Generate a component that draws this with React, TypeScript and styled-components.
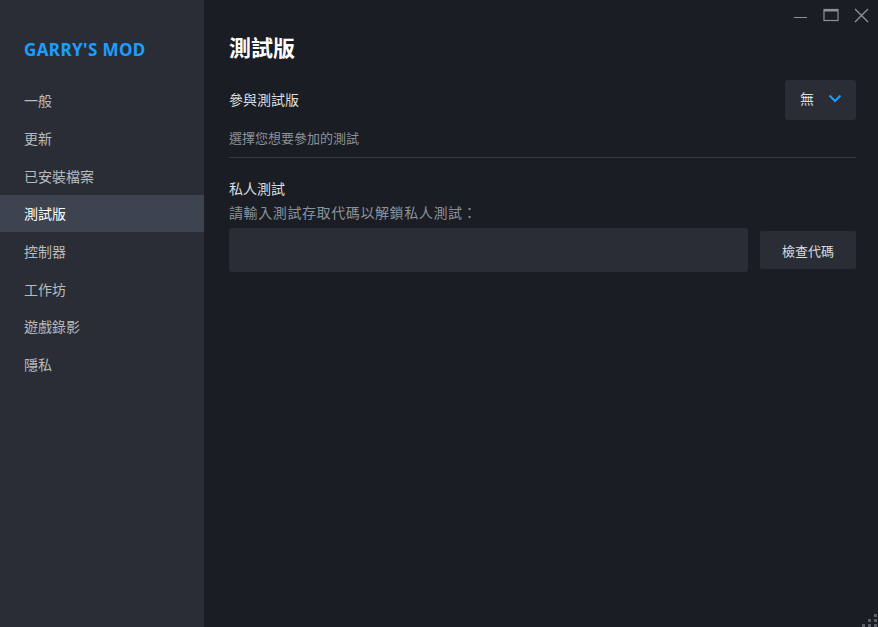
import React from "react";
import styled, { createGlobalStyle } from "styled-components";

const GlobalStyle = createGlobalStyle`
  html, body { margin: 0; padding: 0; height: 100%; }
  body {
    background: #1a1d24;
    font-family: "Noto Sans CJK TC", "Noto Sans", sans-serif;
    overflow: hidden;
  }
  #root { height: 100%; }
`;

const NAV = ["一般", "更新", "已安裝檔案", "測試版", "控制器", "工作坊", "遊戲錄影", "隱私"];

const Shell = styled.div`
  display: flex;
  height: 627px;
  position: relative;
`;

const Sidebar = styled.aside`
  width: 204px;
  flex-shrink: 0;
  background: #2a2d35;
  padding-top: 38px;
  box-sizing: border-box;
`;

const Logo = styled.div`
  font-family: "Noto Sans", "Liberation Sans", sans-serif;
  font-weight: 700;
  font-size: 17px;
  line-height: 24px;
  color: #1a9fff;
  padding-left: 24px;
  margin-bottom: 19.5px;
  letter-spacing: 0.4px;
`;

const NavItem = styled.div<{ $active?: boolean }>`
  height: 37.7px;
  display: flex;
  align-items: center;
  padding-left: 24px;
  font-size: 14px;
  color: ${(p) => (p.$active ? "#ffffff" : "#b8bcbf")};
  background: ${(p) => (p.$active ? "#3d4450" : "transparent")};
`;

const Main = styled.main`
  flex: 1;
  padding: 30px 22px 0 25px;
  box-sizing: border-box;
`;

const Title = styled.h1`
  margin: 0 0 18px;
  font-size: 22px;
  line-height: 32px;
  font-weight: 700;
  color: #ffffff;
`;

const Row = styled.div`
  display: flex;
  align-items: center;
  justify-content: space-between;
  height: 40px;
`;

const Label = styled.div`
  font-size: 14px;
  line-height: 20px;
  color: #dcdedf;
`;

const RowLabel = styled(Label)`
  margin-top: -3px;
`;

const Hint = styled.div<{ $top?: number }>`
  font-size: 13px;
  line-height: 18px;
  color: #8b929a;
  margin-top: ${(p) => p.$top ?? 0}px;
`;

const Dropdown = styled.div`
  width: 71px;
  height: 40px;
  box-sizing: border-box;
  border-radius: 3px;
  background: #2a2d35;
  display: flex;
  align-items: center;
  padding-left: 15px;
  padding-bottom: 4px;
  gap: 14px;
  font-size: 14px;
  color: #dcdedf;
`;

const Divider = styled.div`
  height: 1px;
  background: #363a42;
  margin: 10px 0 20px;
`;

const SubHint = styled.div`
  font-size: 14px;
  line-height: 20px;
  color: #8b929a;
  margin-top: 4px;
  letter-spacing: 0.6px;
`;

const CodeRow = styled.div`
  display: flex;
  align-items: center;
  gap: 12px;
  margin-top: 6px;
`;

const CodeInput = styled.input`
  flex: 1;
  height: 44px;
  border: none;
  border-radius: 3px;
  background: #2a2d35;
  outline: none;
  color: #dcdedf;
  font-size: 14px;
  padding: 0 12px;
`;

const Button = styled.button`
  width: 96px;
  height: 38px;
  border: none;
  border-radius: 2px;
  background: #2a2d35;
  color: #dcdedf;
  font-family: "Noto Sans CJK TC", sans-serif;
  font-size: 13px;
  padding: 0;
`;

const WindowControls = styled.div`
  position: absolute;
  top: 6px;
  right: 2px;
  display: flex;
`;

const WinBtn = styled.div`
  width: 30px;
  height: 18px;
  display: flex;
  align-items: center;
  justify-content: center;
  color: #8b929a;
`;

const Grip = styled.svg`
  position: absolute;
  right: 0;
  bottom: 0;
`;

export default function App() {
  return (
    <>
      <GlobalStyle />
      <Shell>
        <Sidebar>
          <Logo>GARRY'S MOD</Logo>
          {NAV.map((n) => (
            <NavItem key={n} $active={n === "測試版"}>
              {n}
            </NavItem>
          ))}
        </Sidebar>
        <Main>
          <Title>測試版</Title>
          <Row>
            <RowLabel>參與測試版</RowLabel>
            <Dropdown>
              無
              <svg width="14" height="9" viewBox="0 0 14 9">
                <path d="M1.5 1.5 L7 7 L12.5 1.5" stroke="#1a9fff" strokeWidth="2" fill="none" />
              </svg>
            </Dropdown>
          </Row>
          <Hint $top={9}>選擇您想要參加的測試</Hint>
          <Divider />
          <Label>私人測試</Label>
          <SubHint>請輸入測試存取代碼以解鎖私人測試：</SubHint>
          <CodeRow>
            <CodeInput />
            <Button>檢查代碼</Button>
          </CodeRow>
        </Main>
        <WindowControls>
          <WinBtn>
            <svg width="14" height="14" viewBox="0 0 14 14">
              <path d="M0 9.5 H13" stroke="currentColor" strokeWidth="1" />
            </svg>
          </WinBtn>
          <WinBtn>
            <svg width="16" height="14" viewBox="0 0 16 14">
              <rect x="1" y="1.5" width="14" height="11" stroke="currentColor" strokeWidth="1.2" fill="none" />
              <path d="M1 2.5 H15" stroke="currentColor" strokeWidth="2" />
            </svg>
          </WinBtn>
          <WinBtn>
            <svg width="15" height="15" viewBox="0 0 15 15">
              <path d="M1 1 L14 14 M14 1 L1 14" stroke="currentColor" strokeWidth="1.4" />
            </svg>
          </WinBtn>
        </WindowControls>
        <Grip width="16" height="14" viewBox="0 0 16 14">
          <g fill="#5a5f68">
            <rect x="12" y="1" width="3" height="3" />
            <rect x="6" y="6" width="3" height="3" />
            <rect x="12" y="6" width="3" height="3" />
            <rect x="0" y="11" width="3" height="3" />
            <rect x="6" y="11" width="3" height="3" />
            <rect x="12" y="11" width="3" height="3" />
          </g>
        </Grip>
      </Shell>
    </>
  );
}
